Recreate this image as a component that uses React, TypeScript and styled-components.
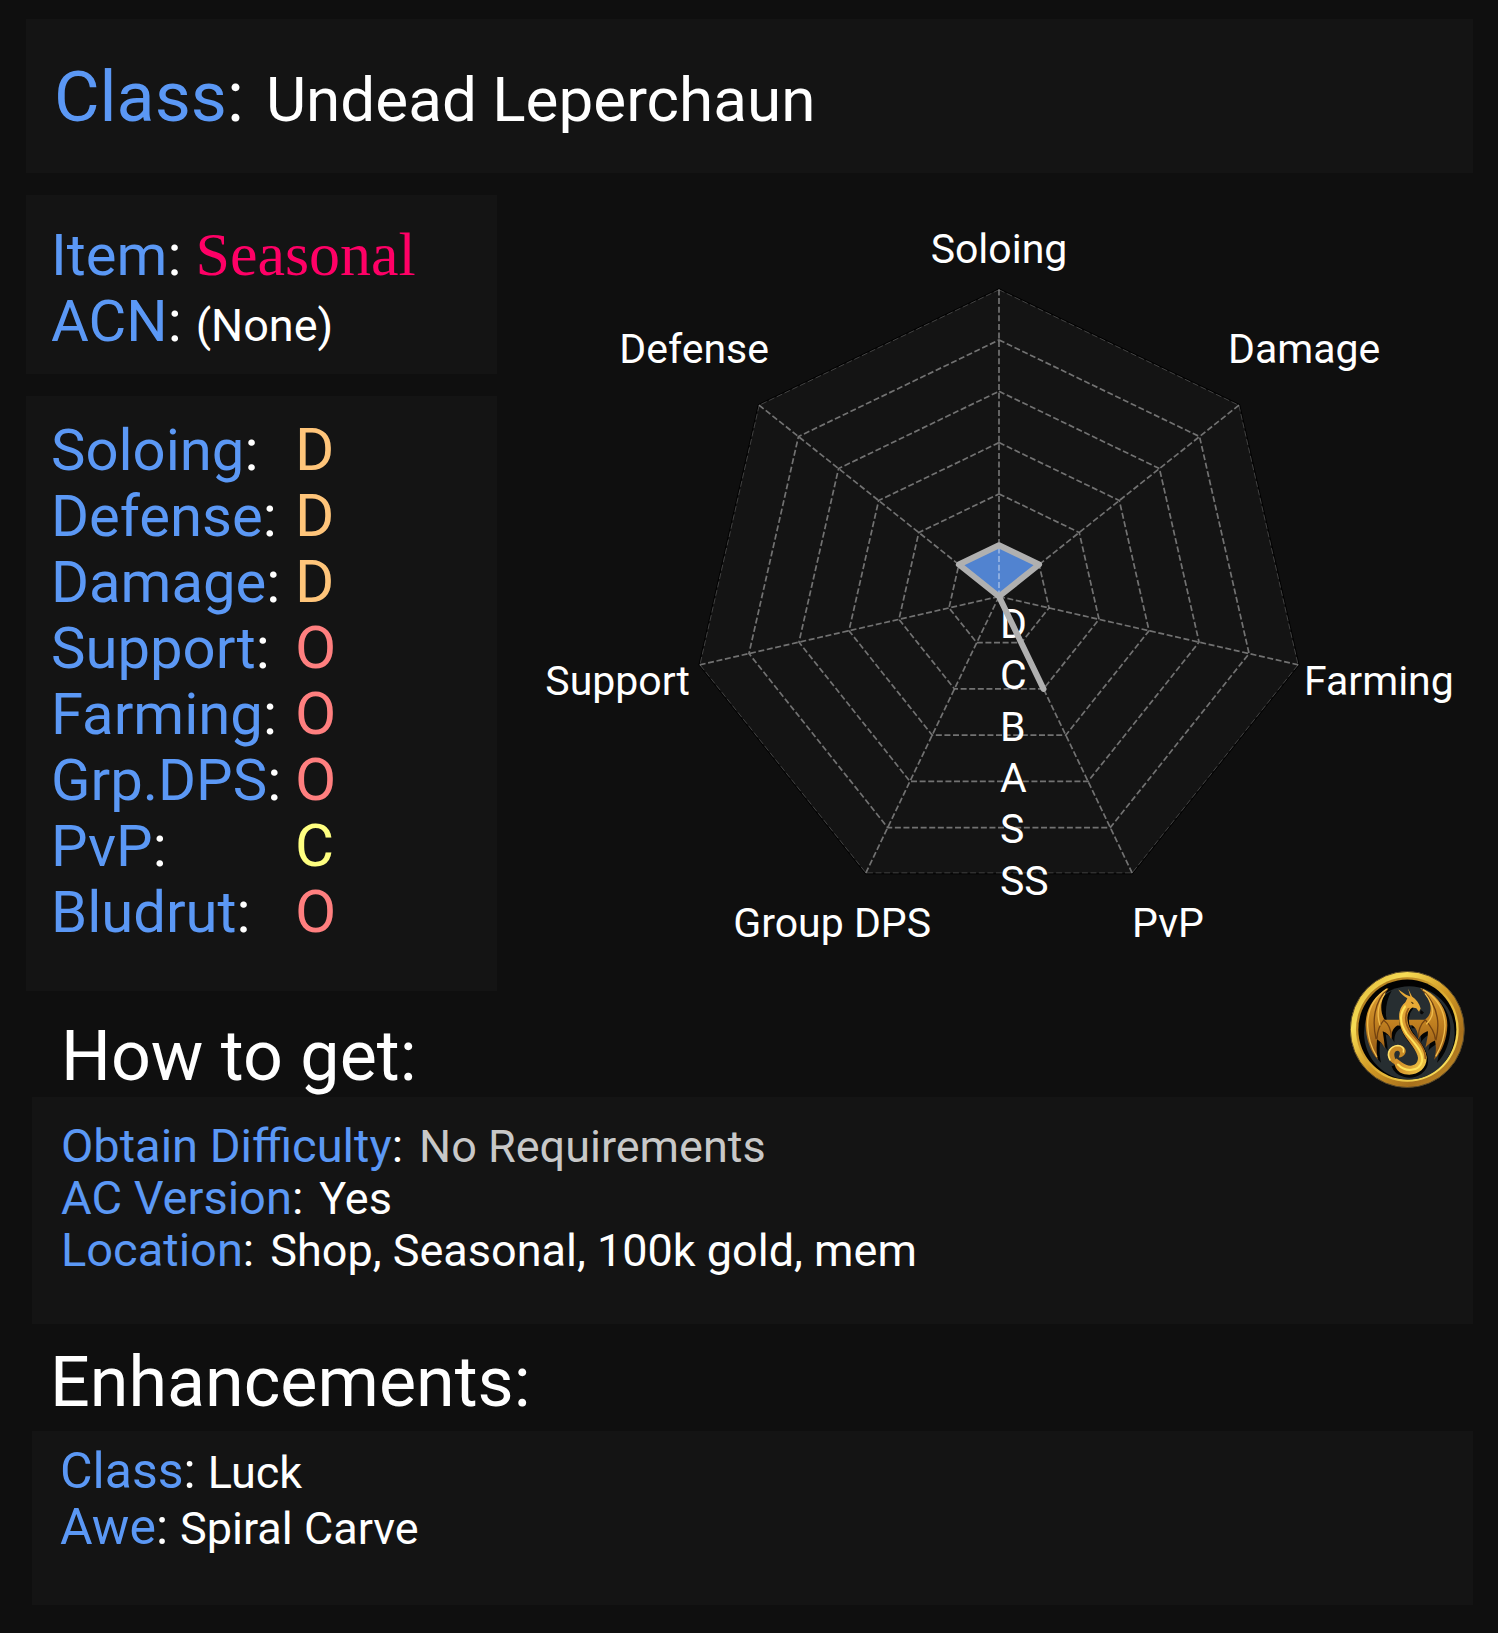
import React from "react";
import styled, { createGlobalStyle } from "styled-components";

const GlobalStyle = createGlobalStyle`
  *, *::before, *::after { box-sizing: border-box; }
  html, body { margin: 0; padding: 0; background: #0f0f0f; }
  h1, h2, dl, dd, dt { margin: 0; font-weight: 400; }
`;

const Page = styled.main`
  padding: 19px 25px 29px 26px;
  color: #fff;
  background: #0f0f0f;
  font-family: Roboto, "Liberation Sans", sans-serif;
`;

const Panel = styled.section<{ $pad: string }>`
  padding: ${(p) => p.$pad};
  background: #141414;
`;

const Indent = styled.div`
  padding-left: 6px;
`;

const Title = styled.h1`
  display: flex;
  align-items: baseline;
  column-gap: 22px;
  height: 70px;
  font-size: 62px;
  line-height: 70px;
  white-space: nowrap;
`;

const Overview = styled.div`
  display: grid;
  grid-template-columns: 471px minmax(0, 1fr);
  align-items: start;
  column-gap: 23px;
  padding-top: 22px;
`;

const Side = styled.div`
  display: flex;
  flex-direction: column;
  gap: 22px;
`;

const Key = styled.dt<{ $size: number }>`
  color: #5b98f5;
  font-size: ${(p) => p.$size}px;
  white-space: nowrap;

  &::after {
    content: ":";
    color: #fff;
  }
`;

const Facts = styled.dl<{ $line: number; $gap: number }>`
  line-height: ${(p) => p.$line}px;

  & > div {
    display: flex;
    align-items: baseline;
    column-gap: ${(p) => p.$gap}px;
    height: ${(p) => p.$line}px;
    white-space: nowrap;
  }
`;

const Value = styled.dd<{ $color?: string }>`
  color: ${(p) => p.$color ?? "#fff"};
  font-size: 45px;
`;

const SeasonalTag = styled.dd`
  color: #ff0066;
  font-family: "Liberation Serif", serif;
  font-size: 62px;
  line-height: 60px;
`;

const Ratings = styled.dl`
  & > div {
    display: grid;
    grid-template-columns: 244px 1fr;
    align-items: baseline;
    height: 66px;
    line-height: 66px;
  }
`;

const Grade = styled.dd<{ $color: string }>`
  color: ${(p) => p.$color};
  font-size: 60px;
`;

const Chart = styled.svg`
  display: block;
  width: 100%;
  height: auto;
  font-family: Roboto, "Liberation Sans", sans-serif;
  font-size: 41px;
`;

const HeadingRow = styled.div<{ $pad: string }>`
  display: flex;
  justify-content: space-between;
  align-items: flex-end;
  padding: ${(p) => p.$pad};
`;

const Heading = styled.h2`
  font-size: 70px;
  line-height: 70px;
`;

const Badge = styled.svg`
  flex: none;
  width: 115px;
  height: 117px;
  margin: -50px 8px 3px 0;
`;

const gradeColors: Record<string, string> = {
  D: "#ffc57a",
  C: "#ffff80",
  O: "#ff7f7f",
};

const ratings: [string, string][] = [
  ["Soloing", "D"],
  ["Defense", "D"],
  ["Damage", "D"],
  ["Support", "O"],
  ["Farming", "O"],
  ["Grp.DPS", "O"],
  ["PvP", "C"],
  ["Bludrut", "O"],
];

const grades = ["D", "C", "B", "A", "S", "SS"];

const axes = [
  { name: "Soloing", level: 1, x: 479, y: 68, anchor: "middle" },
  { name: "Damage", level: 1, x: 708, y: 168, anchor: "start" },
  { name: "Farming", level: 0, x: 784, y: 500, anchor: "start" },
  { name: "PvP", level: 2, x: 612, y: 742, anchor: "start" },
  { name: "Group DPS", level: 0, x: 411, y: 742, anchor: "end" },
  { name: "Support", level: 0, x: 170, y: 500, anchor: "end" },
  { name: "Defense", level: 1, x: 249, y: 168, anchor: "end" },
] as const;

const CX = 479;
const CY = 401.5;
const STEP = 51.3;

const point = (axis: number, level: number) => {
  const a = (axis * 2 * Math.PI) / axes.length;
  return [CX + Math.sin(a) * level * STEP, CY - Math.cos(a) * level * STEP];
};

const ring = (level: number) =>
  axes.map((_, i) => point(i, level).join(",")).join(" ");

function Radar() {
  const shape = axes.map((a, i) => point(i, a.level).join(",")).join(" ");
  return (
    <Chart viewBox="0 0 953 796" role="img" aria-label="Class ratings chart">
      <polygon points={ring(6)} fill="#141414" stroke="#000" strokeWidth="1" />
      <polygon points={shape} fill="#5183d0" />
      <g fill="none" stroke="#fff" strokeOpacity="0.4" strokeWidth="1.7" strokeDasharray="6 2.6">
        {[1, 2, 3, 4, 5].map((l) => (
          <polygon key={l} points={ring(l)} />
        ))}
        <polygon points={ring(5.98)} strokeOpacity="0.2" strokeWidth="1" />
        {axes.map((a, i) => {
          const [x, y] = point(i, 6);
          return <line key={a.name} x1={CX} y1={CY} x2={x} y2={y} />;
        })}
      </g>
      <g fill="#fff">
        {grades.map((g, i) => (
          <text key={g} x="480" y={443 + i * STEP}>{g}</text>
        ))}
        {axes.map((a) => (
          <text key={a.name} x={a.x} y={a.y} textAnchor={a.anchor}>{a.name}</text>
        ))}
      </g>
      <polygon points={shape} fill="none" stroke="#b0b0b0" strokeWidth="6" strokeLinejoin="round" />
    </Chart>
  );
}

function DragonBadge() {
  return (
    <Badge viewBox="60 60 345 350" role="img" aria-label="Golden dragon emblem">
      <defs>
        <linearGradient id="rim" x1="0" y1="0" x2="1" y2="1">
          <stop offset="0" stopColor="#d9a92c" />
          <stop offset="0.25" stopColor="#f6dc55" />
          <stop offset="0.5" stopColor="#d29a25" />
          <stop offset="0.75" stopColor="#a8701c" />
          <stop offset="1" stopColor="#c8962c" />
        </linearGradient>
        <linearGradient id="rimInner" x1="0" y1="0" x2="1" y2="1">
          <stop offset="0" stopColor="#a06c18" />
          <stop offset="0.6" stopColor="#e6b738" />
          <stop offset="1" stopColor="#fff06a" />
        </linearGradient>
        <linearGradient id="wing" x1="0" y1="0" x2="0" y2="1">
          <stop offset="0" stopColor="#e0a234" />
          <stop offset="0.5" stopColor="#bf7f20" />
          <stop offset="1" stopColor="#8d5314" />
        </linearGradient>
        <linearGradient id="body" x1="0" y1="0" x2="1" y2="1">
          <stop offset="0" stopColor="#f0b840" />
          <stop offset="0.5" stopColor="#d3902a" />
          <stop offset="1" stopColor="#f3cf4c" />
        </linearGradient>
      </defs>
      <ellipse cx="232" cy="235" rx="171" ry="174" fill="url(#rim)" stroke="#5b4a2a" strokeWidth="3" />
      <ellipse cx="232" cy="235" rx="154" ry="157" fill="url(#rimInner)" />
      <ellipse cx="232" cy="235" rx="147" ry="150" fill="#020202" />
      <ellipse cx="238" cy="245" rx="136" ry="140" fill="#272e31" />
      <g fill="#030404" transform="translate(9 9)">
        <path d="M176 110C128 136 106 178 107 222C108 262 120 300 144 326C138 300 140 282 141 264C150 270 160 279 164 291C164 272 160 256 158 240C170 244 180 253 184 265C184 248 186 232 202 223L222 224V206H164C154 180 158 140 176 110Z" />
        <path d="M270 110C326 130 352 178 352 222C351 262 338 300 312 326C320 300 318 284 315 268C306 272 292 280 286 290C290 270 294 256 294 240C284 242 270 252 264 265C266 246 258 228 246 222H236V206H284C306 186 296 140 270 110Z" />
      </g>
      <path d="M176 110C128 136 106 178 107 222C108 262 120 300 144 326C138 300 140 282 141 264C150 270 160 279 164 291C164 272 160 256 158 240C170 244 180 253 184 265C184 248 186 232 202 223L222 224V206H164C148 180 150 144 176 110Z" fill="url(#wing)" />
      <path d="M270 110C326 130 352 178 352 222C351 262 338 300 312 326C320 300 318 284 315 268C306 272 292 280 286 290C290 270 294 256 294 240C284 242 270 252 264 265C266 246 258 228 246 222H236V206H284C314 186 304 144 270 110Z" fill="url(#wing)" />
      <g fill="none" strokeLinecap="round">
        <path d="M172 114C132 152 126 210 138 262M162 206C148 222 142 240 141 262M162 208C174 216 184 236 184 258" stroke="#744310" strokeWidth="4" />
        <path d="M170 114C122 146 112 190 113 224C114 262 124 290 140 316M164 128C142 160 140 190 150 222" stroke="#f0bd4c" strokeWidth="4" />
        <path d="M276 114C322 160 332 210 318 266M286 206C300 222 314 244 316 264M284 208C272 218 264 240 266 258" stroke="#744310" strokeWidth="4" />
        <path d="M280 116C332 146 344 190 345 224C344 262 332 290 318 314M286 128C314 164 314 194 290 218" stroke="#f0bd4c" strokeWidth="4" />
      </g>
      <path d="M232 154C202 190 214 226 238 256C272 294 284 330 258 350C234 366 198 358 190 334" transform="translate(8 7)" fill="none" stroke="#030404" strokeWidth="28" />
      <path d="M205 342C180 338 170 318 176 300C182 284 206 276 222 288C233 298 226 318 206 319C210 310 212 302 204 299C192 298 190 312 197 325Z" fill="#c98b26" />
      <path d="M242 146C198 160 202 212 220 246C238 276 262 298 264 320C264 346 236 350 216 334L200 322C188 324 192 352 210 364C246 382 292 362 290 318C288 286 250 258 238 228C228 204 230 180 248 168Z" fill="url(#body)" />
      <path d="M230 160C204 190 212 222 230 248C256 278 280 304 276 330C268 362 226 364 204 340" fill="none" stroke="#ffe35a" strokeWidth="6" strokeLinecap="round" />
      <path d="M236 170C220 198 228 224 244 246C268 272 286 292 286 322" fill="none" stroke="#9a5c16" strokeWidth="5" strokeLinecap="round" />
      <path d="M180 326C168 304 182 284 204 283C216 284 224 292 220 302" fill="none" stroke="#ffe06a" strokeWidth="5" strokeLinecap="round" />
      <path d="M205 115L228 131L241 136L234 112L246 136C258 144 268 156 272 172L267 182L259 171L244 168L230 172L224 158L232 141C222 136 212 128 205 115Z" fill="#e7a936" />
      <path d="M242 151L252 156L247 158Z" fill="#241404" />
      <path d="M272 176L282 184L276 190L270 186Z" fill="#060606" />
    </Badge>
  );
}

export default function App() {
  return (
    <>
      <GlobalStyle />
      <Page>
        <Panel as="header" $pad="43px 28px 41px">
          <Title>
            <Key as="span" $size={70}>Class</Key>
            <span>Undead Leperchaun</span>
          </Title>
        </Panel>

        <Overview>
          <Side>
            <Panel $pad="27px 25px 20px">
              <Facts $line={66} $gap={14}>
                <div>
                  <Key $size={58}>Item</Key>
                  <SeasonalTag>Seasonal</SeasonalTag>
                </div>
                <div>
                  <Key $size={58}>ACN</Key>
                  <Value>(None)</Value>
                </div>
              </Facts>
            </Panel>
            <Panel $pad="21px 25px 46px">
              <Ratings>
                {ratings.map(([name, grade]) => (
                  <div key={name}>
                    <Key $size={58}>{name}</Key>
                    <Grade $color={gradeColors[grade]}>{grade}</Grade>
                  </div>
                ))}
              </Ratings>
            </Panel>
          </Side>
          <Radar />
        </Overview>

        <HeadingRow $pad="30px 0 6px 35px">
          <Heading>How to get:</Heading>
          <DragonBadge />
        </HeadingRow>
        <Indent>
          <Panel $pad="23px 29px 48px">
            <Facts $line={52} $gap={16}>
              <div>
                <Key $size={47}>Obtain Difficulty</Key>
                <Value $color="#c8c8c8">No Requirements</Value>
              </div>
              <div>
                <Key $size={47}>AC Version</Key>
                <Value>Yes</Value>
              </div>
              <div>
                <Key $size={47}>Location</Key>
                <Value>Shop, Seasonal, 100k gold, mem</Value>
              </div>
            </Facts>
          </Panel>
        </Indent>

        <HeadingRow $pad="23px 0 14px 24px">
          <Heading>Enhancements:</Heading>
        </HeadingRow>
        <Indent>
          <Panel $pad="12px 28px 50px">
            <Facts $line={56} $gap={12}>
              <div>
                <Key $size={50}>Class</Key>
                <Value>Luck</Value>
              </div>
              <div>
                <Key $size={50}>Awe</Key>
                <Value>Spiral Carve</Value>
              </div>
            </Facts>
          </Panel>
        </Indent>
      </Page>
    </>
  );
}
